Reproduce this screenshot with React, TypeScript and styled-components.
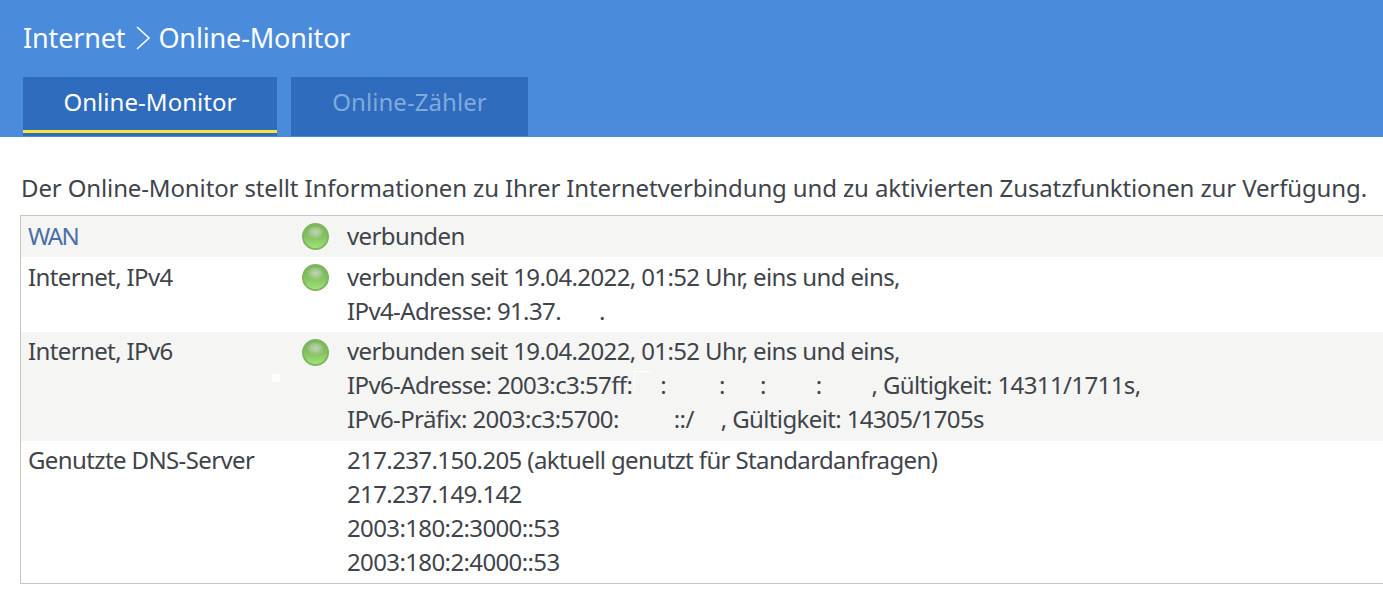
import React from "react";
import styled, { createGlobalStyle } from "styled-components";

const Global = createGlobalStyle`
  html, body { margin: 0; padding: 0; background: #fff; overflow: hidden; }
  body { font-family: "Noto Sans", "Open Sans", sans-serif; color: #3f444b; }
`;
const Header = styled.header`
  height: 137px;
  background: #4a8bdc;
  padding: 0 0 0 23px;
  box-sizing: border-box;
  display: flex;
  flex-direction: column;
`;
const Crumbs = styled.h1`
  margin: 0;
  height: 77px;
  display: flex;
  align-items: center;
  padding-bottom: 2px;
  box-sizing: border-box;
  font-size: 27px;
  font-weight: 400;
  color: #fff;
  letter-spacing: -0.15px;
`;
const Chevron = styled.svg`
  width: 16px;
  height: 26px;
  margin: 0 7px 0 10px;
`;
const Tabs = styled.nav`
  display: flex;
  gap: 14px;
`;
const Tab = styled.div<{ $active?: boolean; $w: number }>`
  width: ${(p) => p.$w}px;
  height: 59px;
  background: #2f6cbd;
  position: relative;
  display: flex;
  align-items: center;
  justify-content: center;
  padding-bottom: 10px;
  box-sizing: border-box;
  font-size: 24px;
  letter-spacing: 0.05px;
  color: ${(p) => (p.$active ? "#fff" : "#7faadd")};
  ${(p) => p.$active && `&::after { content: ""; position: absolute; left: 0; right: 0; top: 53px; height: 3px; background: #fbe634; }`}
`;
const Main = styled.main`
  padding: 34px 0 0 20px;
`;
const Intro = styled.p`
  margin: 0 0 10px 1px;
  font-size: 24px;
  line-height: 34px;
  letter-spacing: -0.13px;
  white-space: nowrap;
`;
const Table = styled.section`
  border: 1px solid #c6c6c0;
  width: 1400px;
  box-sizing: border-box;
  position: relative;
`;
const Row = styled.div<{ $shade?: boolean; $raised?: boolean }>`
  display: grid;
  grid-template-columns: 274px 45px 1fr;
  padding: ${(p) => (p.$raised ? "2px 0 5px 7px" : "3px 0 4px 7px")};
  background: ${(p) => (p.$shade ? "#f5f5f3" : "#fff")};
  font-size: 24px;
  line-height: 34px;
  letter-spacing: -0.62px;
  white-space: nowrap;
  &:last-child { padding-bottom: 4px; }
`;
const Label = styled.div<{ $link?: boolean }>`
  color: ${(p) => (p.$link ? "#4a6ea9" : "inherit")};
  ${(p) => p.$link && "letter-spacing: -1.6px;"}
`;
const Led = styled.span<{ $raised?: boolean }>`
  display: block;
  width: 27px;
  height: 27px;
  margin-top: ${(p) => (p.$raised ? 5 : 4)}px;
  border-radius: 50%;
  box-sizing: border-box;
  border: 2px solid #7fb562;
  background:
    radial-gradient(ellipse 9px 7px at 50% 32%, #bcd6ae 0, #a4c992 55%, rgba(150, 200, 125, 0) 100%),
    linear-gradient(180deg, #78b556 0, #82c25f 50%, #a0e278 100%);
`;
const Gap = styled.span<{ $w: number }>`
  display: inline-block;
  width: ${(p) => p.$w}px;
`;
const Speck = styled.span`
  position: absolute;
  left: 251px;
  top: 158px;
  width: 8px;
  height: 8px;
  background: #fff;
`;
const Smudge = styled.span`
  position: absolute;
  left: 613px;
  top: 155px;
  width: 17px;
  height: 18px;
  border-top: 1px solid #fff;
  border-left: 1px solid #fff;
`;

export default function App() {
  return (
    <>
      <Global />
      <Header>
        <Crumbs>
          Internet
          <Chevron viewBox="0 0 16 26" fill="none" stroke="#fff" strokeWidth="1.6">
            <path d="M2 2 L14 13 L2 24" />
          </Chevron>
          Online-Monitor
        </Crumbs>
        <Tabs>
          <Tab $active $w={254}>Online-Monitor</Tab>
          <Tab $w={237}>Online-Zähler</Tab>
        </Tabs>
      </Header>
      <Main>
        <Intro>Der Online-Monitor stellt Informationen zu Ihrer Internetverbindung und zu aktivierten Zusatzfunktionen zur Verfügung.</Intro>
        <Table>
          <Speck />
          <Smudge />
          <Row $shade>
            <Label $link>WAN</Label>
            <div><Led /></div>
            <div>verbunden</div>
          </Row>
          <Row>
            <Label>Internet, IPv4</Label>
            <div><Led /></div>
            <div>
              verbunden seit 19.04.2022, 01:52 Uhr, eins und eins,<br />
              IPv4-Adresse: 91.37.<Gap $w={38} />.
            </div>
          </Row>
          <Row $shade $raised>
            <Label>Internet, IPv6</Label>
            <div><Led $raised /></div>
            <div>
              verbunden seit 19.04.2022, 01:52 Uhr, eins und eins,<br />
              IPv6-Adresse: 2003:c3:57ff:<Gap $w={28} />:<Gap $w={53} />:<Gap $w={35} />:<Gap $w={50} />:<Gap $w={50} />, Gültigkeit: 14311/1711s,<br />
              IPv6-Präfix: 2003:c3:5700:<Gap $w={55} />::/<Gap $w={27} />, Gültigkeit: 14305/1705s
            </div>
          </Row>
          <Row $raised>
            <Label>Genutzte DNS-Server</Label>
            <div />
            <div>
              217.237.150.205 (aktuell genutzt für Standardanfragen)<br />
              217.237.149.142<br />
              2003:180:2:3000::53<br />
              2003:180:2:4000::53
            </div>
          </Row>
        </Table>
      </Main>
    </>
  );
}
